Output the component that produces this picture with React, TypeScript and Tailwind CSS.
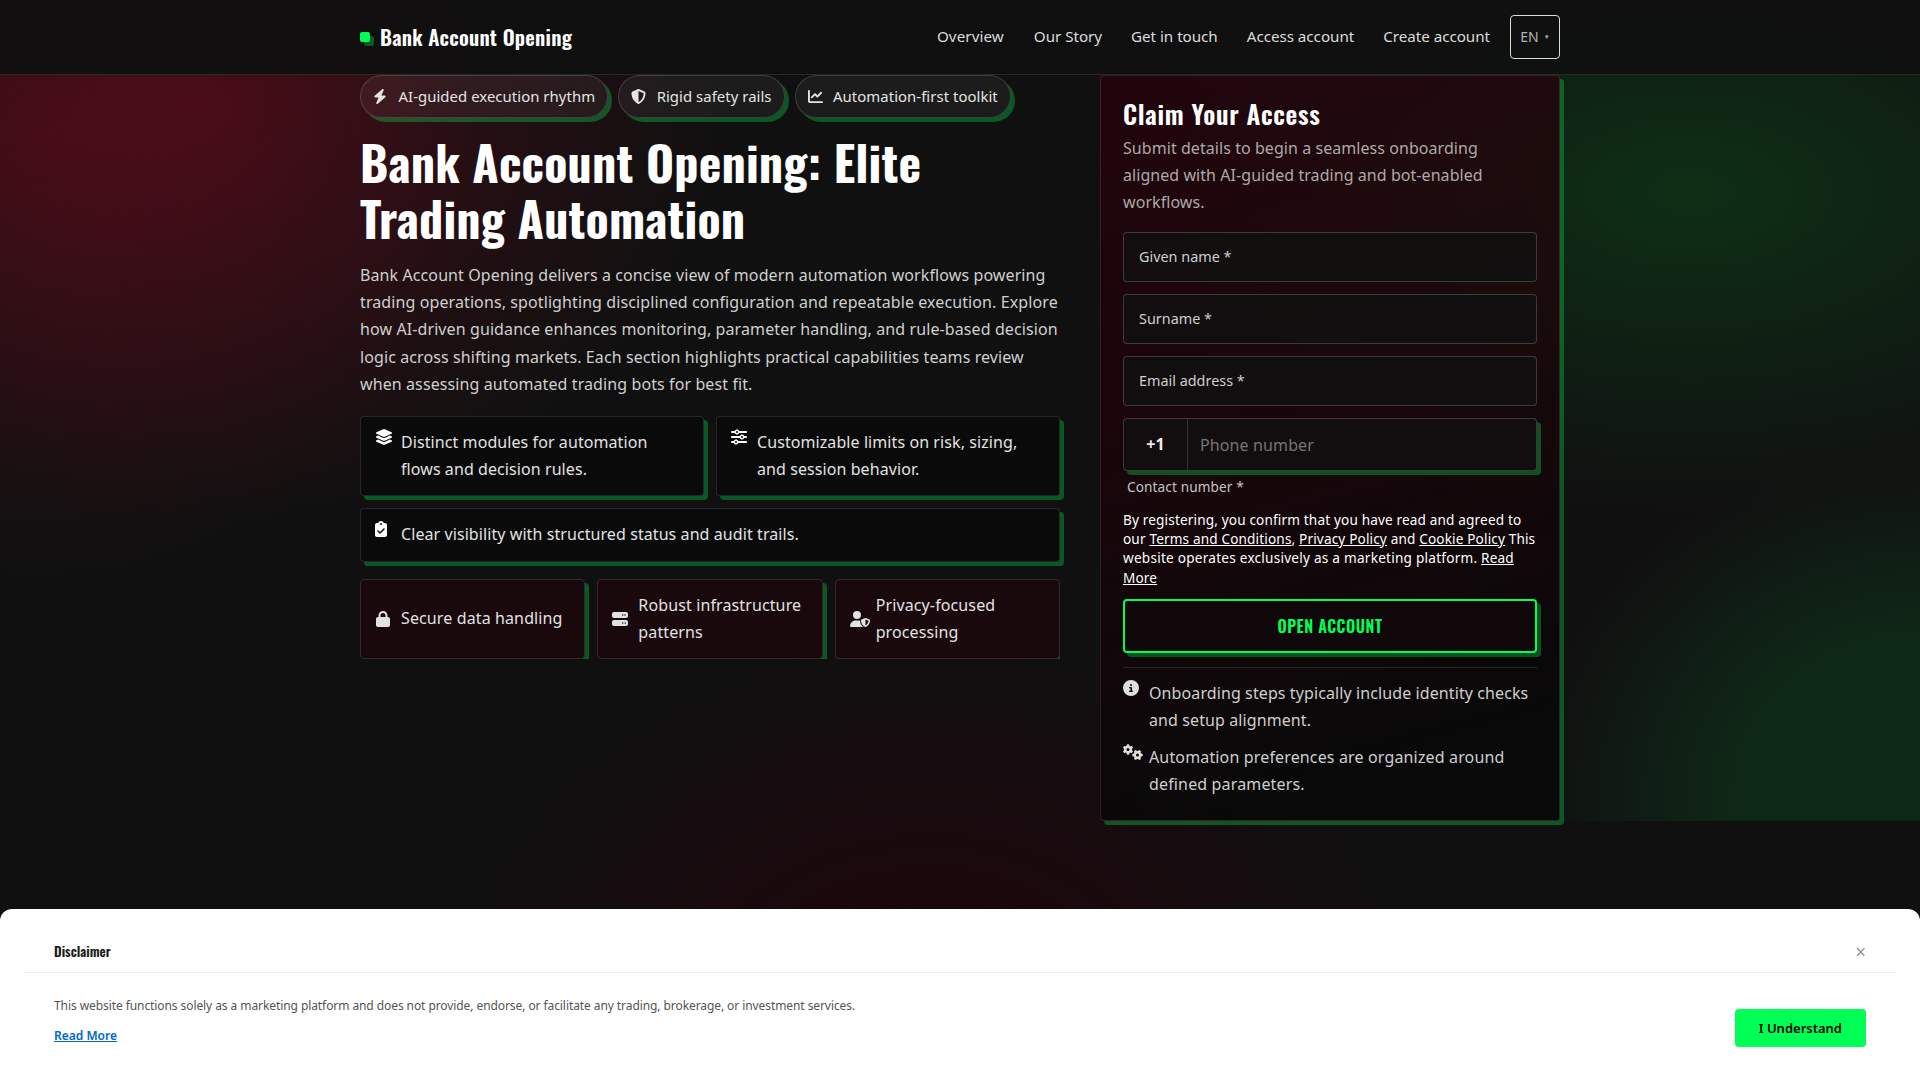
import type { ReactNode } from "react";
import {
  FaBolt,
  FaChartLine,
  FaCircleInfo,
  FaClipboardCheck,
  FaGears,
  FaLayerGroup,
  FaLock,
  FaServer,
  FaShieldHalved,
  FaSliders,
  FaUserShield,
} from "react-icons/fa6";

const navLinks = ["Overview", "Our Story", "Get in touch", "Access account", "Create account"];

const chips = [
  { icon: <FaBolt className="w-3.5" />, label: "AI-guided execution rhythm" },
  { icon: <FaShieldHalved />, label: "Rigid safety rails" },
  { icon: <FaChartLine />, label: "Automation-first toolkit" },
];

const trustItems = [
  { icon: <FaLock className="ml-px w-3.5" />, label: "Secure data handling" },
  { icon: <FaServer />, label: "Robust infrastructure patterns" },
  { icon: <FaUserShield className="w-5 max-w-none" />, label: "Privacy-focused processing" },
];

const fields = ["Given name *", "Surname *", "Email address *"];

function Header() {
  return (
    <header className="relative z-10 h-[75px] border-b border-white/10 bg-[#101010]/95">
      <div className="mx-auto flex h-full w-[1200px] items-center justify-between">
        <a className="flex items-center gap-2.5 font-['Oswald','Open_Sans',sans-serif] text-[20.8px] font-semibold tracking-[0.23px] text-white">
          <span className="size-2.5 rounded-xs bg-[#00ff55] shadow-[4px_4px_0_rgba(0,255,85,0.3)]" />
          Bank Account Opening
        </a>
        <nav className="flex items-center text-[15.2px] tracking-[-0.03px] text-[#dcdcdc]">
          {navLinks.map((link) => (
            <a key={link} className="mr-[29px] mb-0.5 first:mr-[30px] first:tracking-[0.08px] last-of-type:mr-5">
              {link}
            </a>
          ))}
          <button
            type="button"
            className="flex h-11 w-[50px] items-center justify-center gap-[5px] rounded border border-[#dcdcdc] text-sm text-[#b4b4b4]"
          >
            EN
            <span className="text-[6px]">▼</span>
          </button>
        </nav>
      </div>
    </header>
  );
}

function Feature({ icon, children, className = "" }: { icon: ReactNode; children: ReactNode; className?: string }) {
  return (
    <li
      className={`grid grid-cols-[18px_1fr] items-start gap-2 rounded border border-white/12 bg-[#0a0a0a] px-3.5 py-3 text-[#e2e2e2] shadow-[4px_4px_0_rgba(0,255,85,0.3)] ${className}`}
    >
      <span className="text-white">{icon}</span>
      {children}
    </li>
  );
}

function Hero() {
  return (
    <div className="w-[700px]">
      <div className="flex gap-2.5">
        {chips.map((chip) => (
          <span
            key={chip.label}
            className="flex h-[43px] items-center gap-[9.5px] rounded-full border border-white/15 bg-white/5 px-3 text-[14.9px] tracking-[0.05px] text-[#e4e4e4] shadow-[4px_4px_0_rgba(0,255,85,0.3)]"
          >
            <span className="w-4 text-[15px]">{chip.icon}</span>
            {chip.label}
          </span>
        ))}
      </div>
      <h1 className="mt-4 font-['Oswald','Open_Sans',sans-serif] text-5xl leading-[56px] font-bold tracking-[0.18px] text-white">
        Bank Account Opening: Elite Trading Automation
      </h1>
      <p className="mt-4 leading-[27.2px] tracking-[0.1px] text-[#cfcfcf]">
        Bank Account Opening delivers a concise view of modern automation workflows powering trading operations,
        spotlighting disciplined configuration and repeatable execution. Explore how AI-driven guidance enhances
        monitoring, parameter handling, and rule-based decision logic across shifting markets. Each section highlights
        practical capabilities teams review when assessing automated trading bots for best fit.
      </p>
      <ul className="mt-[18px] grid grid-cols-2 gap-3 leading-[27.2px] tracking-[0.08px]">
        <Feature icon={<FaLayerGroup className="w-[18px]" />}>
          Distinct modules for automation flows and decision rules.
        </Feature>
        <Feature icon={<FaSliders />}>Customizable limits on risk, sizing, and session behavior.</Feature>
        <Feature icon={<FaClipboardCheck className="w-3" />} className="col-span-2">
          Clear visibility with structured status and audit trails.
        </Feature>
      </ul>
      <div className="mt-[17px] grid grid-cols-3 gap-3 overflow-hidden leading-[27.2px]">
        {trustItems.map((item) => (
          <div
            key={item.label}
            className="grid grid-cols-[18px_1fr] items-center gap-2 rounded border border-[#35272b] bg-[#19090d] px-3.5 py-3 text-[#e2e2e2] shadow-[4px_4px_0_rgba(0,255,85,0.3)]"
          >
            {item.icon}
            {item.label}
          </div>
        ))}
      </div>
    </div>
  );
}

function AccessForm() {
  return (
    <aside className="h-[746px] w-[460px] rounded border border-[#ffb0c0]/15 bg-[linear-gradient(165deg,rgba(43,0,12,0.7)_0%,rgba(28,2,9,0.72)_45%,rgba(8,8,8,0.85)_88%)] px-[22px] pt-[22px] shadow-[4px_4px_0_rgba(0,255,85,0.3)]">
      <h2 className="font-['Oswald','Open_Sans',sans-serif] text-[25.6px] leading-[31px] font-semibold tracking-[0.7px] text-white">
        Claim Your Access
      </h2>
      <p className="mt-1.5 leading-[27.2px] tracking-[0.06px] text-[#aea8a9]">
        Submit details to begin a seamless onboarding aligned with AI-guided trading and bot-enabled workflows.
      </p>
      <form className="mt-[15px]">
        <div className="flex flex-col gap-3">
          {fields.map((field) => (
            <label
              key={field}
              className="flex h-[50px] items-center rounded border border-white/18 bg-[#101010]/85 px-[15px] text-[14.4px] tracking-normal text-[#cfcfcf]"
            >
              {field}
            </label>
          ))}
          <div className="flex h-[53px] rounded border border-white/18 bg-[#120d0f] shadow-[4px_4px_0_rgba(0,255,85,0.3)]">
            <span className="flex w-16 items-center justify-center border-r border-white/15 font-bold text-[#ececec]">
              +1
            </span>
            <span className="flex items-center pt-0.5 pl-3 text-[#757575]">Phone number</span>
          </div>
        </div>
        <span className="mt-1 block pl-1 text-[13.6px] leading-[23px] text-[#c4c4c4]">Contact number *</span>
        <p className="mt-3 text-[13.6px] leading-[19.4px] tracking-[0.15px] text-white">
          By registering, you confirm that you have read and agreed to
          <br />
          our <a className="underline">Terms and Conditions</a>, <a className="underline">Privacy Policy</a> and{" "}
          <a className="underline">Cookie Policy</a> <span className="tracking-[0.1px]">This</span>{" "}
          <span className="tracking-[0.24px]">website operates exclusively as a marketing platform.</span>{" "}
          <a className="underline">
            Read
            <br />
            More
          </a>
        </p>
        <button
          type="button"
          className="mt-3 h-[54px] w-full rounded border-2 border-[#00ff55] bg-[#10080b] font-['Oswald','Open_Sans',sans-serif] font-semibold tracking-[0.56px] text-[#00ff55] shadow-[4px_4px_0_rgba(0,255,85,0.3)]"
        >
          OPEN ACCOUNT
        </button>
      </form>
      <ul className="mt-3.5 flex flex-col gap-[9.6px] border-t border-white/12 pt-3 leading-[27.2px] text-[#cfcfcf]">
        <li className="grid grid-cols-[18px_1fr] gap-2 tracking-[0.1px]">
          <FaCircleInfo className="text-[#dedede]" />
          Onboarding steps typically include identity checks and setup alignment.
        </li>
        <li className="grid grid-cols-[18px_1fr] gap-2 tracking-[0.15px]">
          <FaGears className="w-5 max-w-none text-[#dedede]" />
          Automation preferences are organized around defined parameters.
        </li>
      </ul>
    </aside>
  );
}

function Disclaimer() {
  return (
    <div className="absolute inset-x-0 bottom-0 z-20 h-[171px] rounded-t-xl bg-white px-6 tracking-normal">
      <div className="flex h-16 items-center justify-between border-b border-[#ececec] px-[30px] pt-[22px]">
        <h3 className="font-['Oswald','Open_Sans',sans-serif] text-[13.4px] font-semibold text-[#1a1a1a]">
          Disclaimer
        </h3>
        <button type="button" className="pt-0.5 text-[19px] leading-none text-[#999999]">
          ×
        </button>
      </div>
      <div className="flex justify-between px-[30px]">
        <div className="pt-[23px] text-xs">
          <p className="leading-5 tracking-[-0.08px] text-[#555555]">
            This website functions solely as a marketing platform and does not provide, endorse, or facilitate any
            trading, brokerage, or investment services.
          </p>
          <a className="mt-2.5 block leading-5 font-semibold text-[#0066cc] underline">Read More</a>
        </div>
        <button type="button" className="mt-9 h-[38px] rounded bg-[#00ff55] px-6 pt-px text-[13px] font-semibold text-black">
          I Understand
        </button>
      </div>
    </div>
  );
}

export default function App() {
  return (
    <div className="relative h-[1080px] w-[1920px] overflow-hidden bg-[#101010] bg-[radial-gradient(520px_420px_at_210px_105px,rgba(255,0,50,0.18),transparent),radial-gradient(600px_320px_at_1690px_192px,rgba(0,255,60,0.13),transparent),radial-gradient(500px_400px_at_930px_1030px,rgba(38,0,10,0.8),transparent)] font-['Noto_Sans',sans-serif] text-base tracking-[0.12px]">
      <Header />
      <section className="h-[746px] bg-[radial-gradient(440px_460px_at_40px_60px,rgba(255,0,50,0.12),transparent),radial-gradient(390px_350px_at_1920px_725px,rgba(0,255,85,0.1)_45%,transparent)]">
        <div className="mx-auto flex w-[1200px] gap-10">
          <Hero />
          <AccessForm />
        </div>
      </section>
      <Disclaimer />
    </div>
  );
}
